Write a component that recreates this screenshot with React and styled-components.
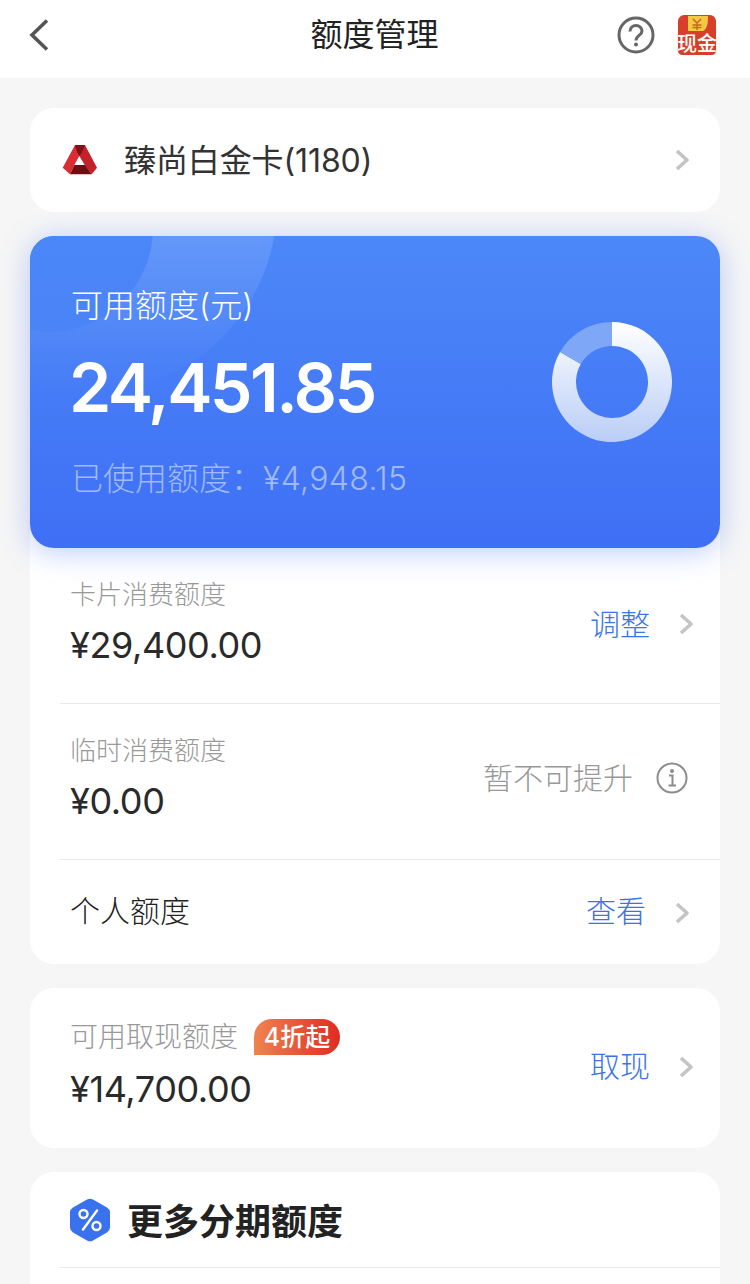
import React from "react";
import styled, { createGlobalStyle } from "styled-components";

const Global = createGlobalStyle`
  html, body { margin: 0; padding: 0; background: #f6f6f6; }
  #root { height: 1284px; overflow: hidden; }
  * { box-sizing: border-box; }
`;
const Page = styled.div`
  width: 750px; height: 1284px; overflow: hidden; background: #f6f6f6;
  font-family: Inter, "Noto Sans CJK SC", sans-serif; color: #222;
`;
const Header = styled.header`
  height: 78px; background: #fff; display: flex; align-items: center;
  justify-content: space-between; padding: 0 33px 8px 28px; position: relative;
`;
const Title = styled.h1`
  position: absolute; left: -1px; right: 0; top: 13px; margin: 0; text-align: center;
  font-size: 32px; line-height: 44px; font-weight: 400; color: #222;
`;
const HeaderIcons = styled.div`display: flex; align-items: center; gap: 22px;`;
const Envelope = styled.div`
  width: 40px; height: 42px; position: relative; display: flex; align-items: flex-end; justify-content: center;
`;
const EnvelopeArt = styled.svg`position: absolute; left: 0; top: 0;`;
const EnvText = styled.span`
  position: relative; font-size: 20px; line-height: 24px; color: #fff; font-weight: 500;
  white-space: nowrap; text-shadow: 0 0 2px #d9472e;
`;
const Content = styled.main`
  padding: 30px 30px 0; display: flex; flex-direction: column; gap: 24px;
`;
const Card = styled.section`
  background: #fff; border-radius: 24px; position: relative;
`;
const SelectCard = styled(Card)`
  height: 104px; display: flex; align-items: center; padding: 0 30px 0 32px;
`;
const CardName = styled.div`
  margin: 1px 0 0 26px; flex: 1; font-size: 32px; line-height: 40px; color: #333; letter-spacing: -0.1px;
`;
const HeroWrap = styled.div`
  border-radius: 24px; box-shadow: 0 4px 30px rgba(64, 112, 245, 0.35); position: relative; z-index: 1;
`;
const Hero = styled.div`
  height: 312px; border-radius: 24px; position: relative; overflow: hidden;
  background: linear-gradient(180deg, #4c88f8 0%, #3f6ff5 100%);
  padding: 50px 41px 0; color: #fff; display: flex; flex-direction: column;
`;
const RingBig = styled.div`
  position: absolute; left: -131px; top: -221px; width: 378px; height: 378px; border-radius: 50%;
  background: linear-gradient(180deg, rgba(255,255,255,0.14) 55%, rgba(255,255,255,0) 100%);
`;
const RingSmall = styled.div`
  position: absolute; left: -85px; top: -112px; width: 208px; height: 208px; border-radius: 50%;
  background: linear-gradient(180deg, #4b87f8 50%, #4a84f7 100%);
`;
const HeroLabel = styled.div`
  position: relative; font-size: 32px; line-height: 40px; font-weight: 300;
`;
const Amount = styled.div`
  position: relative; font-size: 68px; line-height: 80px; font-weight: 600; margin: 21px 0 0 -2px;
  letter-spacing: -2.6px;
`;
const Used = styled.div`
  position: relative; font-size: 32px; line-height: 40px; margin-top: 32px; color: rgba(255,255,255,0.5);
  font-weight: 300;
`;
const UsedNum = styled.span`letter-spacing: 0.35px;`;
const Donut = styled.svg`position: absolute; left: 522px; top: 86px;`;
const Row = styled.div`
  height: ${(p) => p.$h}px; display: flex; align-items: center; margin-left: 30px;
  padding: 0 ${(p) => p.$pr ?? 24}px ${(p) => p.$pb ?? 0}px 10px;
  border-bottom: ${(p) => (p.$line ? "1px solid #eaeaea" : "0")};
`;
const RowMain = styled.div`flex: 1; display: flex; flex-direction: column; gap: ${(p) => p.$gap ?? 7}px;`;
const Label = styled.div`
  font-size: ${(p) => p.$size ?? 26}px; line-height: 36px; color: #999; font-weight: 300; display: flex; align-items: center;
`;
const Value = styled.div`
  font-size: 36px; line-height: 50px; color: #2a2a2a; font-weight: 400; letter-spacing: -0.4px;
`;
const Action = styled.span`
  font-size: 30px; line-height: 40px; color: ${(p) => (p.$muted ? "#999" : "#3b74e6")};
  margin: 0 ${(p) => p.$mr ?? 28}px ${(p) => p.$lift ?? 0}px 0; font-weight: 300;
`;
const PlainText = styled.div`flex: 1; font-size: 30px; line-height: 40px; color: #222; font-weight: 300;`;
const Badge = styled.span`
  margin-left: 16px; height: 36px; width: 86px; border-radius: 18px 18px 18px 0;
  background: linear-gradient(90deg, #f08350 0%, #e02b22 100%);
  color: #fff; font-size: 25px; line-height: 36px; font-weight: 500; text-align: center;
`;
const MoreHead = styled.div`
  height: 96px; margin-left: 30px; padding-left: 10px; display: flex; align-items: center; gap: 17px;
  border-bottom: 1px solid #eaeaea;
`;
const MoreTitle = styled.h2`margin: 4px 0 0; font-size: 36px; line-height: 50px; font-weight: 700; color: #222;`;
const MoreBody = styled.div`height: 100px;`;
const ChevronIcon = styled.svg`margin-top: ${(p) => p.$dy ?? 0}px; flex: none;`;
const InfoIcon = styled.svg`margin-bottom: 3px; flex: none;`;

const Chevron = ({ dy }) => (
  <ChevronIcon $dy={dy} width="16" height="24" viewBox="0 0 16 24" fill="none">
    <path d="M3 3l10 9-10 9" stroke="#c4c4c4" strokeWidth="3.6" strokeLinejoin="round" />
  </ChevronIcon>
);

const Logo = () => (
  <svg width="36" height="32" viewBox="0 0 36 32">
    <path d="M13 1h10l12 22.700-5.300 6.600-7-9.300-5.400-9z" fill="#c4222a" />
    <path d="M13 1h10l-5.700 11-5 9L8 30.300.7 23.700z" fill="#d92c33" />
    <path d="M13 1h10l-3 7.500-2.700 3.500-2.300-4z" fill="#7e1216" />
    <path d="M12.300 21H23l6.700 9.300H8z" fill="#6f0e10" />
  </svg>
);

export default function App() {
  const a = (-60 * Math.PI) / 180;
  const ox = 60 + 60 * Math.sin(a), oy = 60 - 60 * Math.cos(a);
  const ix = 60 + 36 * Math.sin(a), iy = 60 - 36 * Math.cos(a);
  return (
    <Page>
      <Global />
      <Header>
        <svg width="24" height="36" viewBox="0 0 24 36" fill="none">
          <path d="M19 3.500L4 18l15 14.500" stroke="#555" strokeWidth="3.6" />
        </svg>
        <Title>额度管理</Title>
        <HeaderIcons>
          <svg width="38" height="38" viewBox="0 0 38 38" fill="none">
            <circle cx="19" cy="19" r="17" stroke="#666" strokeWidth="3" />
            <path d="M13 15.500c0-3.600 2.700-6 6-6s6 2.400 6 5.400c0 4.600-6 4.400-6 9.600" stroke="#666" strokeWidth="3" />
            <circle cx="19" cy="28.500" r="2" fill="#666" />
          </svg>
          <Envelope>
            <EnvelopeArt width="40" height="42" viewBox="0 0 40 42">
              <path d="M1 7c0-3 3-6 6-6h26c3 0 6 3 6 6v30c0 2-2 4-4 4H5c-2 0-4-2-4-4z" fill="#d6402b" />
              <path d="M11 2h20c0 8-1 13-5 15H11z" fill="#f6c745" />
              <path d="M16 5l4 4 4-4M20 9v7M15.500 11h9M15.500 13.500h9" stroke="#c9662a" strokeWidth="1.500" fill="none" />
            </EnvelopeArt>
            <EnvText>现金</EnvText>
          </Envelope>
        </HeaderIcons>
      </Header>
      <Content>
        <SelectCard>
          <Logo />
          <CardName>臻尚白金卡(1180)</CardName>
          <Chevron />
        </SelectCard>
        <Card>
          <HeroWrap>
            <Hero>
              <RingBig />
              <RingSmall />
              <HeroLabel>可用额度(元)</HeroLabel>
              <Amount>24,451.85</Amount>
              <Used>已使用额度：<UsedNum>¥4,948.15</UsedNum></Used>
              <Donut width="120" height="120" viewBox="0 0 120 120">
                <defs>
                  <linearGradient id="dg" x1="0" y1="0" x2="0" y2="1">
                    <stop offset="0" stopColor="#ffffff" />
                    <stop offset="1" stopColor="#b9cdf6" />
                  </linearGradient>
                </defs>
                <path d={`M60 0A60 60 0 1 1 ${ox} ${oy}L${ix} ${iy}A36 36 0 1 0 60 24Z`} fill="url(#dg)" />
                <path d={`M60 0A60 60 0 0 0 ${ox} ${oy}L${ix} ${iy}A36 36 0 0 1 60 24Z`} fill="#7ea7f8" />
              </Donut>
            </Hero>
          </HeroWrap>
          <Row $h={156} $line $pr={26} $pb={4}>
            <RowMain>
              <Label>卡片消费额度</Label>
              <Value>¥29,400.00</Value>
            </RowMain>
            <Action>调整</Action>
            <Chevron />
          </Row>
          <Row $h={156} $line $pr={32} $pb={5}>
            <RowMain>
              <Label>临时消费额度</Label>
              <Value>¥0.00</Value>
            </RowMain>
            <Action $muted $mr={23} $lift={3}>暂不可提升</Action>
            <InfoIcon width="32" height="32" viewBox="0 0 32 32" fill="none">
              <circle cx="16" cy="16" r="14.500" stroke="#8c8c8c" strokeWidth="2" />
              <circle cx="16" cy="9" r="2" fill="#8c8c8c" />
              <path d="M13 13.500h3.500V23M12.500 23.500h7.500" stroke="#8c8c8c" strokeWidth="2" />
            </InfoIcon>
          </Row>
          <Row $h={104} $pr={30} $pb={2}>
            <PlainText>个人额度</PlainText>
            <Action $mr={28}>查看</Action>
            <Chevron dy={4} />
          </Row>
        </Card>
        <Card>
          <Row $h={160} $pr={26} $pb={3}>
            <RowMain $gap={9}>
              <Label $size={28}>可用取现额度<Badge>4折起</Badge></Label>
              <Value>¥14,700.00</Value>
            </RowMain>
            <Action $lift={2}>取现</Action>
            <Chevron />
          </Row>
        </Card>
        <Card>
          <MoreHead>
            <svg width="40" height="44" viewBox="0 0 40 44">
              <path d="M17 1.500a6 6 0 0 1 6 0l14 8a6 6 0 0 1 3 5v15a6 6 0 0 1-3 5l-14 8a6 6 0 0 1-6 0l-14-8a6 6 0 0 1-3-5v-15a6 6 0 0 1 3-5z" fill="#3a72ee" />
              <circle cx="13.500" cy="16" r="4" fill="none" stroke="#fff" strokeWidth="2.400" />
              <circle cx="26.500" cy="28" r="4" fill="none" stroke="#fff" strokeWidth="2.400" />
              <path d="M27 12.500L13 31.500" stroke="#fff" strokeWidth="2.400" strokeLinecap="round" />
            </svg>
            <MoreTitle>更多分期额度</MoreTitle>
          </MoreHead>
          <MoreBody />
        </Card>
      </Content>
    </Page>
  );
}
